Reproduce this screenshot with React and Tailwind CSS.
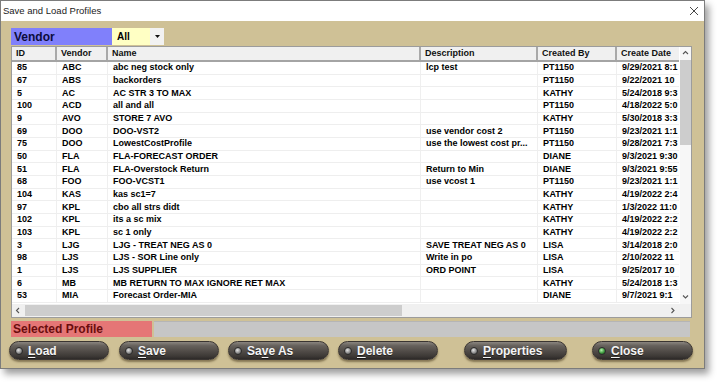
import React from 'react';

const cols = [
  { key: 'id', title: 'ID', w: 'w-[45px]' },
  { key: 'vendor', title: 'Vendor', w: 'w-[51px]' },
  { key: 'name', title: 'Name', w: 'w-[313px]' },
  { key: 'desc', title: 'Description', w: 'w-[117px]' },
  { key: 'by', title: 'Created By', w: 'w-[79px]' },
  { key: 'date', title: 'Create Date', w: 'w-[62px]' },
];

const rows = [
  ['85', 'ABC', 'abc neg stock only', 'lcp test', 'PT1150', '9/29/2021 8:1'],
  ['67', 'ABS', 'backorders', '', 'PT1150', '9/22/2021 10'],
  ['5', 'AC', 'AC STR 3 TO MAX', '', 'KATHY', '5/24/2018 9:3'],
  ['100', 'ACD', 'all and all', '', 'PT1150', '4/18/2022 5:0'],
  ['9', 'AVO', 'STORE 7 AVO', '', 'KATHY', '5/30/2018 3:3'],
  ['69', 'DOO', 'DOO-VST2', 'use vendor cost 2', 'PT1150', '9/23/2021 1:1'],
  ['75', 'DOO', 'LowestCostProfile', 'use the lowest cost pr...', 'PT1150', '9/28/2021 7:3'],
  ['50', 'FLA', 'FLA-FORECAST ORDER', '', 'DIANE', '9/3/2021 9:30'],
  ['51', 'FLA', 'FLA-Overstock Return', 'Return to Min', 'DIANE', '9/3/2021 9:55'],
  ['68', 'FOO', 'FOO-VCST1', 'use vcost 1', 'PT1150', '9/23/2021 1:1'],
  ['104', 'KAS', 'kas sc1=7', '', 'KATHY', '4/19/2022 2:4'],
  ['97', 'KPL', 'cbo all strs didt', '', 'KATHY', '1/3/2022 11:0'],
  ['102', 'KPL', 'its a sc mix', '', 'KATHY', '4/19/2022 2:2'],
  ['103', 'KPL', 'sc 1 only', '', 'KATHY', '4/19/2022 2:2'],
  ['3', 'LJG', 'LJG - TREAT NEG AS 0', 'SAVE TREAT NEG AS 0', 'LISA', '3/14/2018 2:0'],
  ['98', 'LJS', 'LJS - SOR Line only', 'Write in po', 'LISA', '2/10/2022 11'],
  ['1', 'LJS', 'LJS SUPPLIER', 'ORD POINT', 'LISA', '9/25/2017 10'],
  ['6', 'MB', 'MB RETURN TO MAX IGNORE RET MAX', '', 'KATHY', '5/24/2018 1:3'],
  ['53', 'MIA', 'Forecast Order-MIA', '', 'DIANE', '9/7/2021 9:1'],
];

const buttons = [
  { pre: '', u: 'L', post: 'oad', w: 'w-[100px]', ml: 'ml-0' },
  { pre: '', u: 'S', post: 'ave', w: 'w-[100px]', ml: 'ml-[10px]' },
  { pre: 'Sa', u: 'v', post: 'e As', w: 'w-[101px]', ml: 'ml-[9px]' },
  { pre: '', u: 'D', post: 'elete', w: 'w-[100px]', ml: 'ml-[9px]' },
  { pre: '', u: 'P', post: 'roperties', w: 'w-[103px]', ml: 'ml-[26px]' },
  { pre: '', u: 'C', post: 'lose', w: 'w-[101px]', ml: 'ml-[25px]', green: true },
];

function Chevron({ dir }) {
  const d = {
    up: 'M1 4 L3.5 1.5 L6 4',
    down: 'M1 1.5 L3.5 4 L6 1.5',
    left: 'M4 1 L1.5 3.5 L4 6',
    right: 'M1.5 1 L4 3.5 L1.5 6',
  }[dir];
  return (
    <svg width='7' height='7' viewBox='0 0 7 7'>
      <path d={d} fill='none' stroke='#555' strokeWidth='1.1' />
    </svg>
  );
}

function PillButton({ b }) {
  return (
    <div
      className={`${b.w} ${b.ml} h-[19px] rounded-full flex items-center pl-[5px] shrink-0 bg-[linear-gradient(to_bottom,#8a857f_0%,#66615c_22%,#504b47_55%,#3c3835_85%,#2d2a28_100%)] shadow-[0_2px_2px_rgba(60,45,20,0.5)] border border-[#3a3532]`}
    >
      <div
        className={`w-[8px] h-[8px] rounded-full border border-[#2b2b2b] ${
          b.green
            ? 'bg-[radial-gradient(circle_at_40%_35%,#b8f5b0_0%,#3f9b3f_55%,#164a16_100%)]'
            : 'bg-[radial-gradient(circle_at_40%_35%,#e6e6e6_0%,#8c8c8c_55%,#444_100%)]'
        }`}
      />
      <span className='ml-[5px] text-[12px] font-bold text-[#f4f4f4] leading-none [text-shadow:0_1px_0_rgba(0,0,0,0.5)]'>
        {b.pre}
        <span className='underline underline-offset-2'>{b.u}</span>
        {b.post}
      </span>
    </div>
  );
}

export default function App() {
  return (
    <div className="w-[720px] h-[382px] bg-white font-['Liberation_Sans',Arial,sans-serif] overflow-hidden">
      <div className='w-[705px] h-[369px] border border-[#7c7c7c] shadow-[4px_5px_7px_rgba(0,0,0,0.38)] flex flex-col bg-[#cfc196]'>
        {/* title bar */}
        <div className='h-[20px] bg-white flex items-center justify-between pl-[2px] pr-[5px] shrink-0'>
          <span className='text-[9.5px] text-[#222]'>Save and Load Profiles</span>
          <svg width='10' height='10' viewBox='0 0 10 10'>
            <path d='M1 1 L9 9 M9 1 L1 9' stroke='#333' strokeWidth='0.9' />
          </svg>
        </div>

        <div className='flex-1 flex flex-col pl-[7px] pt-[7px]'>
          {/* vendor filter */}
          <div className='flex h-[17px] ml-[3px]'>
            <div className='w-[101px] bg-[#8080fb] flex items-center pl-[3px] text-[12px] font-bold text-[#0c0c3c]'>
              Vendor
            </div>
            <div className='w-[38px] bg-[#ffffc4] flex items-center pl-[5px] text-[10px] font-bold text-black'>
              All
            </div>
            <div className='w-[14px] bg-[#f2f2f2] flex items-center justify-center'>
              <svg width='5' height='3' viewBox='0 0 5 3'>
                <path d='M0 0 L5 0 L2.5 3 Z' fill='#111' />
              </svg>
            </div>
          </div>

          {/* grid */}
          <div className='w-[681px] h-[272px] mt-[1px] ml-[3px] border border-[#9c9c9c] bg-white flex flex-col'>
            <div className='flex flex-1 min-h-0'>
              <div className='flex flex-col'>
                <div className='flex h-[15px] bg-[#f0f0f0] border-b-2 border-[#a4a4a4] shrink-0'>
                  {cols.map((c, i) => (
                    <div
                      key={c.key}
                      className={`${c.w} ${
                        i < cols.length - 1 ? 'border-r-2 border-[#a9a9a9]' : ''
                      } flex items-center pl-[4px] text-[9px] font-bold text-[#111] overflow-hidden whitespace-nowrap`}
                    >
                      {c.title}
                    </div>
                  ))}
                </div>
                {rows.map((r) => (
                  <div key={r[0]} className='flex h-[12.68px] border-b border-[#eeeeee] shrink-0'>
                    {cols.map((c, i) => (
                      <div
                        key={c.key}
                        className={`${c.w} ${
                          i < cols.length - 1 ? 'border-r border-[#efefef]' : ''
                        } flex items-center pl-[5px] text-[9px] font-bold text-black leading-none overflow-hidden whitespace-nowrap`}
                      >
                        {r[i]}
                      </div>
                    ))}
                  </div>
                ))}
              </div>
              {/* vertical scrollbar */}
              <div className='w-[11px] ml-[1px] bg-[#f7f7f7] flex flex-col items-center'>
                <div className='h-[13px] flex items-center justify-center'>
                  <Chevron dir='up' />
                </div>
                <div className='w-[11px] h-[85px] bg-[#cdcdcd]' />
                <div className='flex-1' />
                <div className='h-[13px] flex items-center justify-center'>
                  <Chevron dir='down' />
                </div>
              </div>
            </div>
            {/* horizontal scrollbar */}
            <div className='flex h-[13px] shrink-0'>
              <div className='w-[668px] bg-[#f0f0f0] flex items-center'>
                <div className='w-[13px] flex items-center justify-center'>
                  <Chevron dir='left' />
                </div>
                <div className='w-[377px] h-[11px] bg-[#cdcdcd]' />
                <div className='flex-1' />
                <div className='w-[13px] flex items-center justify-center'>
                  <Chevron dir='right' />
                </div>
              </div>
              <div className='flex-1 bg-[#f0f0f0]' />
            </div>
          </div>

          {/* selected profile */}
          <div className='flex h-[16px] mt-[3px] ml-[3px]'>
            <div className='w-[141px] bg-[#e57676] flex items-center pl-[2px] text-[12px] font-bold text-[#6a0d0d]'>
              Selected Profile
            </div>
            <div className='w-[536px] ml-[2px] bg-[#c6c6c6] border-t border-[#b5b5b5]' />
          </div>

          {/* buttons */}
          <div className='flex mt-[4px] ml-[1px]'>
            {buttons.map((b) => (
              <PillButton key={b.u + b.post} b={b} />
            ))}
          </div>
        </div>
      </div>
    </div>
  );
}
